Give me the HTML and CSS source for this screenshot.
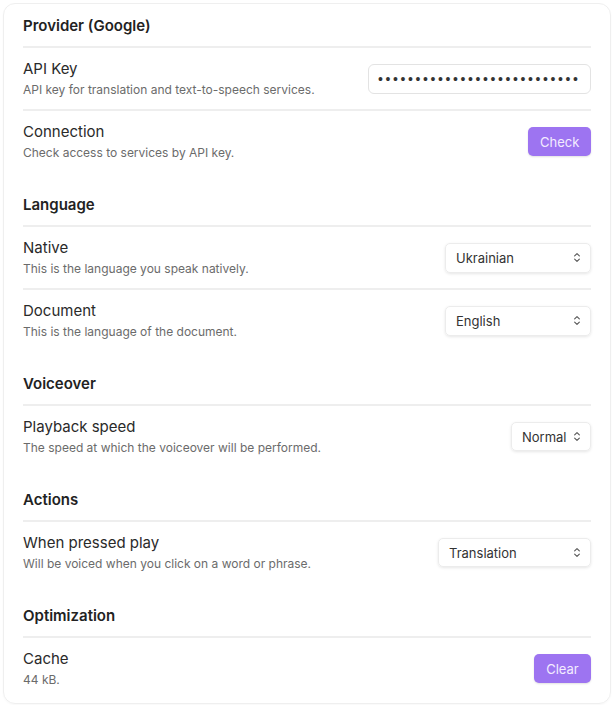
FILE: index.html
```html
<!DOCTYPE html>
<html>
<head>
<meta charset="utf-8">
<link rel="stylesheet" href="styles.css">
</head>
<body>
<div class="card">
  <section class="section">
    <h2 class="section-title">Provider (Google)</h2>
    <div class="row">
      <div class="info"><div class="label">API Key</div><div class="desc">API key for translation and text-to-speech services.</div></div>
      <div class="input">•••••••••••••••••••••••••••</div>
    </div>
    <div class="row">
      <div class="info"><div class="label">Connection</div><div class="desc">Check access to services by API key.</div></div>
      <button class="btn btn-check">Check</button>
    </div>
  </section>
  <section class="section">
    <h2 class="section-title">Language</h2>
    <div class="row">
      <div class="info"><div class="label">Native</div><div class="desc">This is the language you speak natively.</div></div>
      <div class="select w-lang"><span>Ukrainian</span><svg class="chev" viewBox="0 0 10 14" width="8" height="11"><path d="M2 5 L5 2 L8 5 M2 9 L5 12 L8 9" fill="none" stroke="#555" stroke-width="1.4" stroke-linecap="round" stroke-linejoin="round"/></svg></div>
    </div>
    <div class="row">
      <div class="info"><div class="label">Document</div><div class="desc">This is the language of the document.</div></div>
      <div class="select w-lang"><span>English</span><svg class="chev" viewBox="0 0 10 14" width="8" height="11"><path d="M2 5 L5 2 L8 5 M2 9 L5 12 L8 9" fill="none" stroke="#555" stroke-width="1.4" stroke-linecap="round" stroke-linejoin="round"/></svg></div>
    </div>
  </section>
  <section class="section">
    <h2 class="section-title">Voiceover</h2>
    <div class="row">
      <div class="info"><div class="label">Playback speed</div><div class="desc">The speed at which the voiceover will be performed.</div></div>
      <div class="select w-speed"><span>Normal</span><svg class="chev" viewBox="0 0 10 14" width="8" height="11"><path d="M2 5 L5 2 L8 5 M2 9 L5 12 L8 9" fill="none" stroke="#555" stroke-width="1.4" stroke-linecap="round" stroke-linejoin="round"/></svg></div>
    </div>
  </section>
  <section class="section">
    <h2 class="section-title">Actions</h2>
    <div class="row">
      <div class="info"><div class="label">When pressed play</div><div class="desc">Will be voiced when you click on a word or phrase.</div></div>
      <div class="select w-action"><span>Translation</span><svg class="chev" viewBox="0 0 10 14" width="8" height="11"><path d="M2 5 L5 2 L8 5 M2 9 L5 12 L8 9" fill="none" stroke="#555" stroke-width="1.4" stroke-linecap="round" stroke-linejoin="round"/></svg></div>
    </div>
  </section>
  <section class="section">
    <h2 class="section-title">Optimization</h2>
    <div class="row">
      <div class="info"><div class="label">Cache</div><div class="desc">44 kB.</div></div>
      <button class="btn btn-clear">Clear</button>
    </div>
  </section>
</div>
</body>
</html>
```

FILE: styles.css
```css
* { box-sizing: border-box; }
html, body { margin: 0; padding: 0; background: #ffffff; }
body {
  font-family: Inter, "Noto Sans", sans-serif;
  color: #222;
  padding: 3px;
}
.card {
  width: 608px;
  border: 1px solid #efefef;
  border-radius: 12px;
  padding: 11px 19px 4px;
  box-shadow: 0 1px 2px rgba(0,0,0,0.03);
}
.section + .section { margin-top: 22px; }
.section-title {
  margin: 0;
  font-size: 15px;
  font-weight: 600;
  line-height: 22px;
  color: #222;
  padding-bottom: 9px;
  border-bottom: 2px solid #eeeeee;
}
.row {
  display: flex;
  align-items: center;
  justify-content: space-between;
  padding: 10px 0;
}
.row + .row { border-top: 2px solid #eeeeee; }
.label { font-size: 15px; line-height: 22px; color: #2a2a2a; }
.desc { font-size: 12px; line-height: 18px; color: #6b6b6b; margin-top: 1px; }
.input {
  width: 223px;
  height: 30px;
  border: 1px solid #e3e3e3;
  border-radius: 6px;
  font-family: "Liberation Sans", sans-serif;
  font-size: 14px;
  letter-spacing: 2.6px;
  line-height: 28px;
  padding-left: 9px;
  color: #333;
  white-space: nowrap;
  overflow: hidden;
}
.btn {
  font-family: inherit;
  border: none;
  border-radius: 5px;
  background: #9d74f1;
  color: #f3ecff;
  font-size: 13px;
  height: 29px;
  padding: 0 12px;
  box-shadow: 0 1px 2px rgba(0,0,0,0.12);
}
.btn-check { width: 63px; }
.btn-clear { width: 57px; }
.select {
  display: flex;
  align-items: center;
  justify-content: space-between;
  height: 30px;
  padding: 0 9px 0 10px;
  border: 1px solid #ececec;
  border-radius: 5px;
  font-size: 13px;
  color: #333;
  box-shadow: 0 1px 3px rgba(0,0,0,0.1);
}
.w-lang { width: 146px; }
.w-speed { width: 80px; height: 29px; }
.w-action { width: 153px; height: 29px; }
.chev { display: block; }
```
